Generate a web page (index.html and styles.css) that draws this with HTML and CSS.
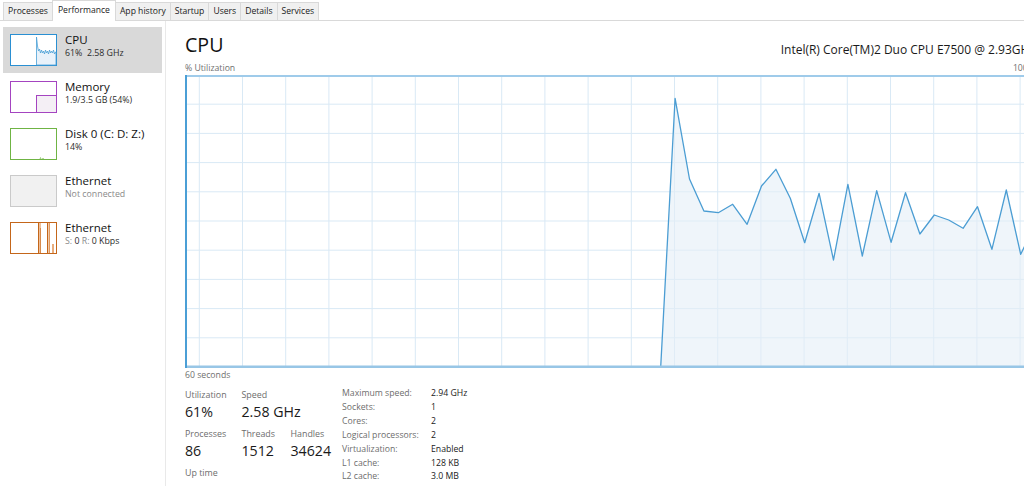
FILE: index.html
```html
<!DOCTYPE html>
<html lang="en">
  <head>
    <meta charset="UTF-8" />
    <title>Task Manager</title>
    <link rel="stylesheet" href="styles.css">
  </head>
  <body>
    <div class="tabs">
      <div class="tab">Processes</div>
      <div class="tab active">Performance</div>
      <div class="tab">App history</div>
      <div class="tab">Startup</div>
      <div class="tab">Users</div>
      <div class="tab">Details</div>
      <div class="tab">Services</div>
    </div>

    <div class="main">
      <aside class="sidebar">
        <div class="item selected">
          <svg class="thumb" viewBox="0 0 47 32">
            <rect x="0.5" y="0.5" width="46" height="31" fill="#fff" stroke="#2a8fd2" />
            <path d="M26.5 31 L26.5 3 L27.5 12 L28.5 17 L29.5 15 L30.5 19 L31.5 16 L32.5 19 L33.5 17 L34.5 20 L35.5 16 L36.5 19 L37.5 17 L38.5 20 L39.5 16 L40.5 19 L41.5 17 L42.5 19 L43.5 16 L44.5 20 L45.5 18 L46 18 L46 31 Z" fill="#e9f2fa" stroke="#4a9fd6" stroke-width="0.8" />
          </svg>
          <div class="item-text">
            <div class="item-title">CPU</div>
            <div class="item-sub">61%&nbsp; 2.58 GHz</div>
          </div>
        </div>
        <div class="item">
          <svg class="thumb" viewBox="0 0 47 32">
            <rect x="0.5" y="0.5" width="46" height="31" fill="#fff" stroke="#a444c0" />
            <rect x="26.5" y="14.5" width="20" height="17" fill="#f4eff5" stroke="#a444c0" />
          </svg>
          <div class="item-text">
            <div class="item-title">Memory</div>
            <div class="item-sub">1.9/3.5 GB (54%)</div>
          </div>
        </div>
        <div class="item">
          <svg class="thumb" viewBox="0 0 47 32">
            <rect x="0.5" y="0.5" width="46" height="31" fill="#fff" stroke="#6fb444" />
            <path d="M30 31 L30.5 29.5 L31 31 M32.5 31 L33 30 L33.5 31" fill="none" stroke="#8cc46a" stroke-width="0.8" />
          </svg>
          <div class="item-text">
            <div class="item-title">Disk 0 (C: D: Z:)</div>
            <div class="item-sub">14%</div>
          </div>
        </div>
        <div class="item">
          <svg class="thumb" viewBox="0 0 47 32">
            <rect x="0.5" y="0.5" width="46" height="31" fill="#f1f1f1" stroke="#cacaca" />
          </svg>
          <div class="item-text">
            <div class="item-title">Ethernet</div>
            <div class="item-sub muted">Not connected</div>
          </div>
        </div>
        <div class="item">
          <svg class="thumb" viewBox="0 0 47 32">
            <rect x="0.5" y="0.5" width="46" height="31" fill="#fff" stroke="#c4661a" />
            <rect x="28" y="1" width="3" height="30" fill="#eebf98" />
            <line x1="28.5" y1="1" x2="28.5" y2="31" stroke="#c4661a" />
            <line x1="30.5" y1="6" x2="30.5" y2="31" stroke="#d88a4c" />
            <rect x="37" y="1" width="3" height="30" fill="#f1c9a8" />
            <line x1="37.5" y1="1" x2="37.5" y2="31" stroke="#c4661a" />
            <line x1="39.5" y1="1" x2="39.5" y2="31" stroke="#de9a62" />
            <rect x="42" y="22" width="2" height="9" fill="#e8ad7e" />
          </svg>
          <div class="item-text">
            <div class="item-title">Ethernet</div>
            <div class="item-sub"><span class="muted">S:</span> 0 <span class="muted">R:</span> 0 Kbps</div>
          </div>
        </div>
      </aside>

      <section class="content">
        <div class="head">
          <h1 class="head-title">CPU</h1>
          <div class="cpu-name">Intel(R) Core(TM)2 Duo CPU E7500 @ 2.93GHz</div>
        </div>
        <div class="axis axis-top">
          <span>% Utilization</span>
          <span>100%</span>
        </div>
        <div class="chart">
          <svg width="850" height="293" viewBox="0 0 850 293">
            <rect x="0" y="0" width="850" height="293" fill="#fff" />
            <g stroke="#d9e9f5" stroke-width="1">
              <line x1="14.3" y1="0" x2="14.3" y2="293" />
              <line x1="57.5" y1="0" x2="57.5" y2="293" />
              <line x1="100.7" y1="0" x2="100.7" y2="293" />
              <line x1="143.9" y1="0" x2="143.9" y2="293" />
              <line x1="187.1" y1="0" x2="187.1" y2="293" />
              <line x1="230.3" y1="0" x2="230.3" y2="293" />
              <line x1="273.5" y1="0" x2="273.5" y2="293" />
              <line x1="316.7" y1="0" x2="316.7" y2="293" />
              <line x1="359.9" y1="0" x2="359.9" y2="293" />
              <line x1="403.1" y1="0" x2="403.1" y2="293" />
              <line x1="446.3" y1="0" x2="446.3" y2="293" />
              <line x1="489.5" y1="0" x2="489.5" y2="293" />
              <line x1="532.7" y1="0" x2="532.7" y2="293" />
              <line x1="575.9" y1="0" x2="575.9" y2="293" />
              <line x1="619.1" y1="0" x2="619.1" y2="293" />
              <line x1="662.3" y1="0" x2="662.3" y2="293" />
              <line x1="705.5" y1="0" x2="705.5" y2="293" />
              <line x1="748.7" y1="0" x2="748.7" y2="293" />
              <line x1="791.9" y1="0" x2="791.9" y2="293" />
              <line x1="835.1" y1="0" x2="835.1" y2="293" />
              <line x1="0" y1="29.2" x2="850" y2="29.2" />
              <line x1="0" y1="58.4" x2="850" y2="58.4" />
              <line x1="0" y1="87.6" x2="850" y2="87.6" />
              <line x1="0" y1="116.8" x2="850" y2="116.8" />
              <line x1="0" y1="146" x2="850" y2="146" />
              <line x1="0" y1="175.2" x2="850" y2="175.2" />
              <line x1="0" y1="204.4" x2="850" y2="204.4" />
              <line x1="0" y1="233.6" x2="850" y2="233.6" />
              <line x1="0" y1="262.8" x2="850" y2="262.8" />
            </g>
            <path d="M475.7 292 L490.1 23.3 L504.5 104 L518.9 136 L533.3 137.7 L547.7 129.3 L562.1 149.3 L576.5 111 L590.9 94.3 L605.3 123.3 L619.7 167.7 L634.1 118.3 L648.5 185 L662.9 109.3 L677.3 181 L691.7 115.7 L706.1 167.3 L720.5 117.7 L734.9 159 L749.3 140 L763.7 145 L778.1 153.3 L792.5 131.7 L806.9 174.3 L821.3 115 L835.7 179.3 L850 150 L850 292 Z" fill="#e4eef7" fill-opacity="0.6" />
            <path d="M0 292 L475.7 292 L490.1 23.3 L504.5 104 L518.9 136 L533.3 137.7 L547.7 129.3 L562.1 149.3 L576.5 111 L590.9 94.3 L605.3 123.3 L619.7 167.7 L634.1 118.3 L648.5 185 L662.9 109.3 L677.3 181 L691.7 115.7 L706.1 167.3 L720.5 117.7 L734.9 159 L749.3 140 L763.7 145 L778.1 153.3 L792.5 131.7 L806.9 174.3 L821.3 115 L835.7 179.3 L850 150" fill="none" stroke="#4b9dd3" stroke-width="1.3" stroke-linejoin="round" />
            <line x1="0" y1="1" x2="850" y2="1" stroke="#9fcbea" stroke-width="2" />
            <line x1="0" y1="291.8" x2="850" y2="291.8" stroke="#98c6e6" stroke-width="2.4" />
            <line x1="1" y1="0" x2="1" y2="293" stroke="#4b9fd6" stroke-width="2" />
          </svg>
        </div>
        <div class="axis axis-bottom">
          <span>60 seconds</span>
        </div>

        <div class="stats">
          <div class="stats-main">
            <div class="stat">
              <div class="stat-label">Utilization</div>
              <div class="stat-value">61%</div>
            </div>
            <div class="stat wide">
              <div class="stat-label">Speed</div>
              <div class="stat-value">2.58 GHz</div>
            </div>
            <div class="stat">
              <div class="stat-label">Processes</div>
              <div class="stat-value">86</div>
            </div>
            <div class="stat">
              <div class="stat-label">Threads</div>
              <div class="stat-value">1512</div>
            </div>
            <div class="stat">
              <div class="stat-label">Handles</div>
              <div class="stat-value">34624</div>
            </div>
            <div class="stat">
              <div class="stat-label">Up time</div>
            </div>
          </div>
          <div class="specs">
            <span class="spec-key">Maximum speed:</span><span class="spec-val">2.94 GHz</span>
            <span class="spec-key">Sockets:</span><span class="spec-val">1</span>
            <span class="spec-key">Cores:</span><span class="spec-val">2</span>
            <span class="spec-key">Logical processors:</span><span class="spec-val">2</span>
            <span class="spec-key">Virtualization:</span><span class="spec-val">Enabled</span>
            <span class="spec-key">L1 cache:</span><span class="spec-val">128 KB</span>
            <span class="spec-key">L2 cache:</span><span class="spec-val">3.0 MB</span>
          </div>
        </div>
      </section>
    </div>
  </body>
</html>
```

FILE: styles.css
```css
/* Task Manager - Performance tab */
body {
  margin: 0;
  width: 1024px;
  height: 486px;
  overflow: hidden;
  background: #fff;
  color: #1a1a1a;
  font-family: "Open Sans", "Noto Sans", sans-serif;
}

/* tabs */
.tabs {
  display: flex;
  align-items: flex-end;
  height: 20px;
  padding-left: 3px;
  border-bottom: 1px solid #d9d9d9;
}

.tab {
  box-sizing: border-box;
  height: 18px;
  line-height: 17px;
  padding: 0 4px;
  font-size: 8.6px;
  background: #f0f0f0;
  border: 1px solid #d9d9d9;
  border-bottom: none;
  border-left: none;
}

.tab:first-child {
  border-left: 1px solid #d9d9d9;
}

.tab.active {
  height: 21px;
  line-height: 19px;
  margin-bottom: -1px;
  margin-left: -1px;
  padding: 0 5px;
  background: #fff;
  border-left: 1px solid #d9d9d9;
}

/* layout */
.main {
  display: flex;
  height: 465px;
}

.sidebar {
  box-sizing: border-box;
  flex: none;
  width: 166px;
  padding: 6px 0 0 3px;
  border-right: 1px solid #e9e9e9;
}

.item {
  box-sizing: border-box;
  display: flex;
  align-items: flex-start;
  gap: 8px;
  width: 159px;
  height: 47px;
  padding: 7px 0 0 7px;
}

.item.selected {
  background: #d9d9d9;
  height: 46px;
  margin-bottom: 1px;
}

.thumb {
  flex: none;
  width: 47px;
  height: 32px;
}

.item-text {
  margin-top: -1.5px;
  white-space: nowrap;
}

.item-title {
  font-size: 11.5px;
  line-height: 14px;
  color: #111;
}

.item-sub {
  font-size: 8.8px;
  line-height: 12px;
  color: #2b2b2b;
}

.muted {
  color: #8a8a8a;
}

/* content */
.content {
  display: flex;
  flex-direction: column;
  flex: none;
  width: 850px;
  padding: 11.7px 0 0 19px;
}

.head {
  display: flex;
  justify-content: space-between;
  align-items: flex-end;
  height: 24px;
}

.head-title {
  margin: 0;
  font-size: 19.6px;
  font-weight: 400;
  line-height: 24px;
  color: #111;
}

.cpu-name {
  font-size: 12px;
  line-height: 14px;
  color: #1a1a1a;
  white-space: nowrap;
}

.axis {
  display: flex;
  justify-content: space-between;
  font-size: 8.7px;
  color: #707070;
}

.axis-top {
  margin-top: 5px;
  height: 13px;
  line-height: 13px;
}

.axis-bottom {
  height: 14px;
  line-height: 14px;
}

.chart svg {
  display: block;
}

/* statistics */
.stats {
  display: flex;
  margin-top: 6px;
}

.stats-main {
  display: grid;
  grid-template-columns: 56.5px 49px 51.5px;
  row-gap: 5px;
  align-content: start;
}

.stat.wide {
  grid-column: span 2;
}

.stat-label {
  font-size: 8.9px;
  line-height: 13px;
  color: #6d6d6d;
  white-space: nowrap;
}

.stat-value {
  font-size: 14.2px;
  line-height: 21px;
  color: #1a1a1a;
  white-space: nowrap;
}

.specs {
  display: grid;
  grid-template-columns: 89px auto;
  align-content: start;
  margin-top: -0.7px;
  font-size: 8.7px;
  line-height: 13.9px;
  white-space: nowrap;
}

.spec-key {
  color: #6d6d6d;
}

.spec-val {
  color: #1a1a1a;
}
```
